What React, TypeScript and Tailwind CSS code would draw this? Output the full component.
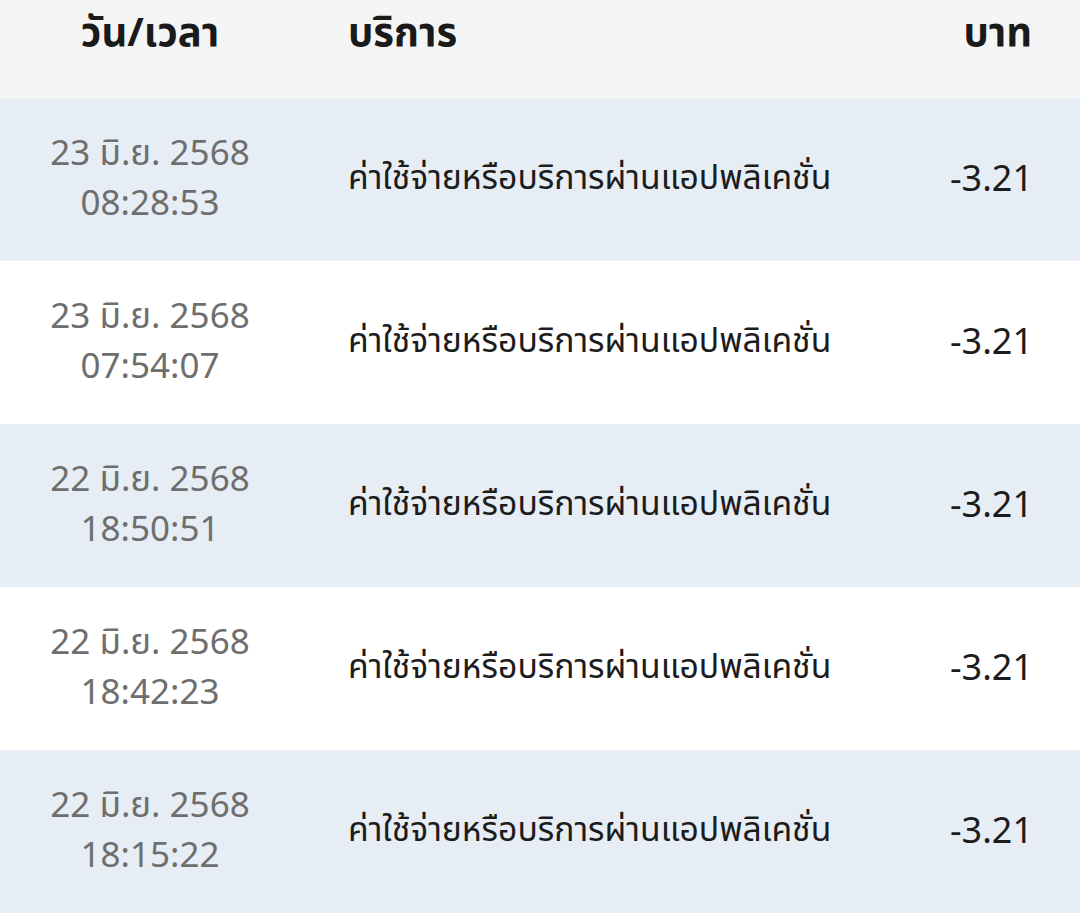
import React from "react";

const rows = [
  { d: "23 มิ.ย. 2568", t: "08:28:53" },
  { d: "23 มิ.ย. 2568", t: "07:54:07" },
  { d: "22 มิ.ย. 2568", t: "18:50:51" },
  { d: "22 มิ.ย. 2568", t: "18:42:23" },
  { d: "22 มิ.ย. 2568", t: "18:15:22" },
];

export default function App() {
  return (
    <div
      className="w-[1080px] h-[915px] bg-white overflow-hidden"
      style={{ fontFamily: '"Noto Sans Thai", "Noto Sans", sans-serif' }}
    >
      <div className="h-[98px] bg-[#f5f5f5] flex items-start pt-[6px] text-[40px] leading-[56px] font-bold text-[#1a1a1a]">
        <div className="w-[300px] text-center">วัน/เวลา</div>
        <div className="w-[48px]" />
        <div className="flex-1">บริการ</div>
        <div className="pr-[48px] w-[160px] text-right">บาท</div>
      </div>
      {rows.map((r, i) => (
        <div
          key={i}
          className={`h-[163px] flex items-center ${i % 2 === 0 ? "bg-[#e6edf4]" : "bg-white"}`}
        >
          <div className="w-[300px] text-center text-[35px] leading-[50px] text-[#6e6e6e]">
            <div>{r.d}</div>
            <div>{r.t}</div>
          </div>
          <div className="w-[48px]" />
          <div className="flex-1 text-[33.7px] text-[#1c1c1c]">ค่าใช้จ่ายหรือบริการผ่านแอปพลิเคชั่น</div>
          <div className="pr-[47px] w-[160px] text-right text-[36px] text-[#1c1c1c]">-3.21</div>
        </div>
      ))}
    </div>
  );
}
